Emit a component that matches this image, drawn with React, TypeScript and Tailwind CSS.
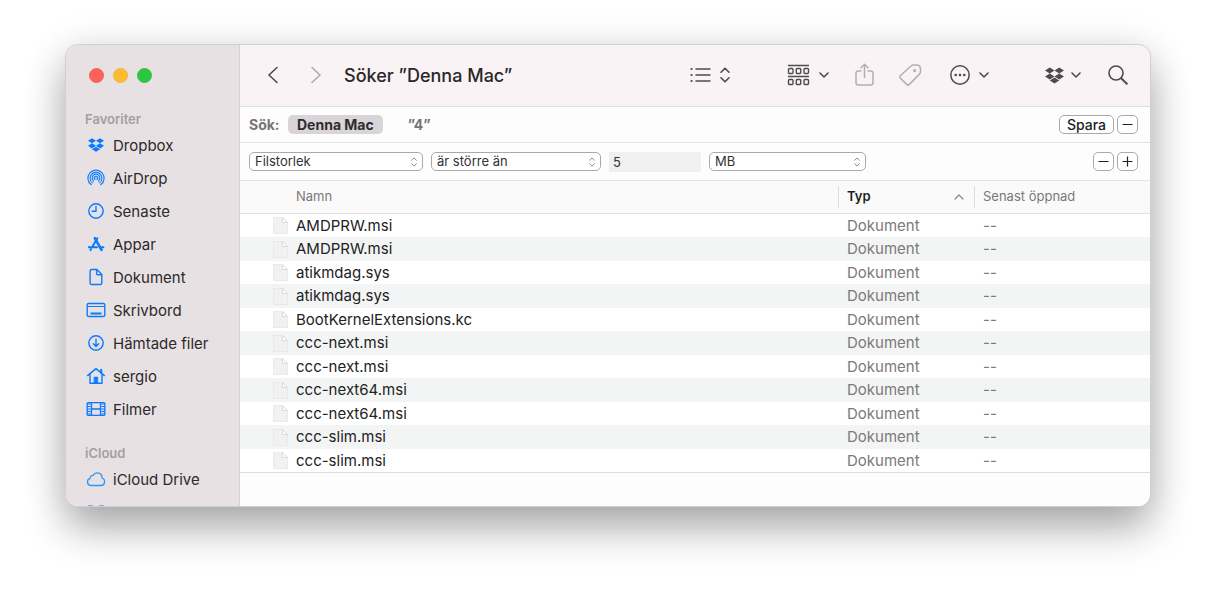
import React, { useState } from 'react';

interface IconProps {
  className?: string;
}

const DropboxIcon: React.FC<IconProps> = ({ className }) => (
  <svg viewBox="0 0 24 24" fill="currentColor" className={className} aria-hidden="true">
    <path d="M6 1.8 0 5.6l6 3.8 6-3.8zM18 1.8l-6 3.8 6 3.8 6-3.8zM0 13.3l6 3.8 6-3.8-6-3.8zM18 9.5l-6 3.8 6 3.8 6-3.8zM6 18.4l6 3.8 6-3.8-6-3.8z" />
  </svg>
);

const Line: React.FC<{ children: React.ReactNode }> = ({ children }) => (
  <svg
    viewBox="0 0 20 20"
    fill="none"
    stroke="currentColor"
    strokeWidth="1.4"
    strokeLinecap="round"
    strokeLinejoin="round"
    className="h-5 w-5"
    aria-hidden="true"
  >
    {children}
  </svg>
);

const AirDropIcon = () => (
  <Line>
    <g strokeWidth="1.1">
      <path d="M5.3 16.8a8.1 8.1 0 1 1 9.4 0" />
      <path d="M6.4 14.9a5.9 5.9 0 1 1 7.2 0" />
      <path d="M7.6 13a3.8 3.8 0 1 1 4.8 0" />
      <path d="M8.9 11.4a1.8 1.8 0 1 1 2.2 0" />
    </g>
    <circle cx="10" cy="10.2" r="0.6" fill="currentColor" stroke="none" />
  </Line>
);

const ClockIcon = () => (
  <Line>
    <circle cx="10" cy="10" r="7.2" />
    <path d="M10 5.4V10.3H6.2" />
  </Line>
);

const AppsIcon = () => (
  <Line>
    <path d="M2.8 13.2h8.2M14.6 13.2h2.8M11.3 4.2 6.4 12.8M5 15.2l-.5.9" strokeWidth="2" />
    <path d="m8.8 4.2 6.700 11.7" strokeWidth="2.6" />
  </Line>
);

const DocumentIcon = () => (
  <Line>
    <path d="M5.7 2.5h5.2l4.9 5v8.4c0 1-.6 1.6-1.6 1.6H5.7c-1 0-1.600-.6-1.600-1.600V4.1c0-1 .6-1.600 1.600-1.600z" />
    <path d="M10.6 2.8v3.8c0 .8.4 1.2 1.2 1.2h3.7" />
  </Line>
);

const DesktopIcon = () => (
  <Line>
    <rect x="1.2" y="3.5" width="17.6" height="13" rx="1.6" />
    <path d="M1.5 6.5h17" strokeWidth="1" />
    <path d="M4.5 13.5h11" strokeWidth="2" strokeLinecap="butt" />
  </Line>
);

const DownloadIcon = () => (
  <Line>
    <circle cx="10" cy="10" r="7.2" />
    <path d="M10 6.2v7.2M7.3 10.8l2.7 2.7 2.7-2.7" />
  </Line>
);

const HomeIcon = () => (
  <Line>
    <path d="M1.6 9.6 10 2.6l8.4 7M4 8.6v8.6h12V8.6" />
    <path d="M15.2 3.8v3" strokeWidth="2" />
    <path d="M8.2 11h3.600v6H8.2z" fill="currentColor" strokeWidth="0.5" />
  </Line>
);

const FilmIcon = () => (
  <Line>
    <rect x="1.2" y="3.6" width="17.6" height="12.8" rx="1.2" />
    <path d="M5.5 3.6v12.8M14.5 3.6v12.8M5.5 10h9" strokeWidth="1.3" />
    <path d="M3.4 4.6v11M16.6 4.6v11" strokeWidth="2.8" strokeDasharray="1 1.5" strokeLinecap="butt" />
  </Line>
);

const CloudIcon = () => (
  <Line>
    <path
      d="M4.6 16.5a3.7 3.7 0 0 1-.5-7.2 2.8 2.8 0 0 1 3.1-2.9 4.7 4.7 0 0 1 8.8 2.6 3.9 3.9 0 0 1-.4 7.5z"
      stroke="#2f97f5"
      strokeWidth="1.3"
    />
  </Line>
);

const BoxIcon = () => (
  <Line>
    <path d="M3 4.2h3.6M13.4 4.2H17M3 4v12h14V4" />
  </Line>
);

const favorites = [
  { name: 'Dropbox', icon: <DropboxIcon className="h-5 w-4" /> },
  { name: 'AirDrop', icon: <AirDropIcon /> },
  { name: 'Senaste', icon: <ClockIcon /> },
  { name: 'Appar', icon: <AppsIcon /> },
  { name: 'Dokument', icon: <DocumentIcon /> },
  { name: 'Skrivbord', icon: <DesktopIcon /> },
  { name: 'Hämtade filer', icon: <DownloadIcon /> },
  { name: 'sergio', icon: <HomeIcon /> },
  { name: 'Filmer', icon: <FilmIcon /> },
];

const files = [
  'AMDPRW.msi',
  'AMDPRW.msi',
  'atikmdag.sys',
  'atikmdag.sys',
  'BootKernelExtensions.kc',
  'ccc-next.msi',
  'ccc-next.msi',
  'ccc-next64.msi',
  'ccc-next64.msi',
  'ccc-slim.msi',
  'ccc-slim.msi',
];

const SidebarLink: React.FC<{ name: string; icon: React.ReactNode }> = ({ name, icon }) => (
  <li>
    <a href="#" className="flex h-[33px] items-start gap-[7px] pt-[6px] pl-5 text-[15px] leading-[22px] text-[#2b292a]">
      <span className="flex w-5 justify-center text-[#0a7aff]">{icon}</span>
      {name}
    </a>
  </li>
);

const ChevronDown = () => (
  <svg viewBox="0 0 10 6" fill="none" stroke="currentColor" strokeWidth="1.6" strokeLinecap="round" strokeLinejoin="round" className="h-[6px] w-[10px]" aria-hidden="true">
    <path d="m1 1 4 4 4-4" />
  </svg>
);

const UpDown: React.FC<IconProps> = ({ className }) => (
  <svg viewBox="0 0 10 16" fill="none" stroke="currentColor" strokeWidth="1.6" strokeLinecap="round" strokeLinejoin="round" className={className} aria-hidden="true">
    <path d="m1 5.2 4-4 4 4M1 10.8l4 4 4-4" />
  </svg>
);

interface PopupProps {
  label: string;
  options: string[];
  width: string;
}

const Popup: React.FC<PopupProps> = ({ label, options, width }) => {
  const [value, setValue] = useState(options[0]);
  return (
    <div className={`relative ${width}`}>
      <select
        aria-label={label}
        value={value}
        onChange={(e) => setValue(e.target.value)}
        className="block h-[19px] w-full appearance-none rounded-[5px] border border-[#aaa8a9] bg-white pl-[5px] text-[13px] leading-[17px] text-[#333]"
      >
        {options.map((option) => (
          <option key={option}>{option}</option>
        ))}
      </select>
      <UpDown className="pointer-events-none absolute top-[5px] right-[6px] h-[10px] w-[6px] text-[#858585]" />
    </div>
  );
};

const SmallButton: React.FC<{ label: string; plus?: boolean }> = ({ label, plus }) => (
  <button aria-label={label} className="flex h-[19px] w-[21px] items-center justify-center rounded-[5px] border border-[#aaa8a9] bg-white text-[#222]">
    <svg viewBox="0 0 11 11" stroke="currentColor" strokeWidth="1.2" className="h-[11px] w-[11px]" aria-hidden="true">
      <path d={plus ? 'M.5 5.5h10M5.5.5v10' : 'M.5 5.5h10'} />
    </svg>
  </button>
);

const FileIcon = () => (
  <svg viewBox="0 0 15 17" className="h-[17px] w-[15px]" aria-hidden="true">
    <path d="M.5.5h9l5 5v11H.5z" fill="#f1f1f1" stroke="#e6e6e6" strokeWidth="0.8" />
    <path d="M9.5.5v5h5z" fill="#fff" stroke="#d3d3d3" strokeWidth="0.8" />
  </svg>
);

const Sidebar = () => (
  <aside className="w-[174px] shrink-0 overflow-hidden border-r border-[#d6d0d3] bg-[#e7e1e3]">
    <div className="flex h-[60px] items-center gap-[9px] pl-[23px]">
      <button aria-label="Stäng" className="h-[15px] w-[15px] rounded-full border border-[#f0655d] bg-[#fe5f57]" />
      <button aria-label="Minimera" className="h-[15px] w-[15px] rounded-full border border-[#efb345] bg-[#febb2e]" />
      <button aria-label="Zooma" className="h-[15px] w-[15px] rounded-full border border-[#3abd4c] bg-[#2ac840]" />
    </div>
    <h2 className="pt-1 pl-[19px] text-[13px] leading-5 font-semibold text-[#a39fa1]">Favoriter</h2>
    <ul>
      {favorites.map((item) => (
        <SidebarLink key={item.name} name={item.name} icon={item.icon} />
      ))}
    </ul>
    <h2 className="mt-[13px] pt-1 pl-[19px] text-[13px] leading-5 font-semibold text-[#a39fa1]">iCloud</h2>
    <ul>
      <SidebarLink name="iCloud Drive" icon={<CloudIcon />} />
      <li className="h-[10px] overflow-hidden pt-[6px] pl-5 text-[#0a7aff]">
        <BoxIcon />
      </li>
    </ul>
  </aside>
);

const Toolbar = () => (
  <header className="flex h-[62px] items-center border-b border-[#e3dddf] bg-[#f9f3f5] pr-[22px] pb-px pl-[27px] text-[#4f4b4d]">
    <button aria-label="Bakåt">
      <svg viewBox="0 0 12 18" fill="none" stroke="currentColor" strokeWidth="1.6" strokeLinecap="round" strokeLinejoin="round" className="h-[18px] w-3" aria-hidden="true">
        <path d="M10 1.5 2 9l8 7.5" />
      </svg>
    </button>
    <button aria-label="Framåt" className="ml-[31px] text-[#b0abad]">
      <svg viewBox="0 0 12 18" fill="none" stroke="currentColor" strokeWidth="1.6" strokeLinecap="round" strokeLinejoin="round" className="h-[18px] w-3" aria-hidden="true">
        <path d="m2 1.5 8 7.5-8 7.5" />
      </svg>
    </button>
    <h1 className="ml-[22px] text-[18px] font-medium whitespace-nowrap text-[#2a2728]">Söker ”Denna Mac”</h1>

    <button aria-label="Visa som lista" className="ml-auto flex items-center gap-[9px]">
      <svg viewBox="0 0 21 16" fill="none" stroke="currentColor" strokeWidth="1.5" strokeLinecap="round" className="h-4 w-[21px]" aria-hidden="true">
        <path d="M6 2h14M6 8h14M6 14h14" />
        <path d="M1.5 2h.1M1.5 8h.1M1.5 14h.1" strokeWidth="2.2" />
      </svg>
      <UpDown className="h-4 w-[10px]" />
    </button>
    <button aria-label="Gruppera" className="ml-[57px] flex items-center gap-[9px]">
      <svg viewBox="0 0 23 22" fill="none" stroke="currentColor" strokeWidth="1.4" className="h-[22px] w-[23px]" aria-hidden="true">
        <path d="M1 1.5h21M1 12.5h21" />
        <rect x="1.5" y="4.5" width="4.5" height="5" rx="1" />
        <rect x="9.25" y="4.5" width="4.5" height="5" rx="1" />
        <rect x="17" y="4.5" width="4.5" height="5" rx="1" />
        <rect x="1.5" y="15.5" width="4.5" height="5" rx="1" />
        <rect x="9.25" y="15.5" width="4.5" height="5" rx="1" />
        <rect x="17" y="15.5" width="4.5" height="5" rx="1" />
      </svg>
      <ChevronDown />
    </button>
    <button aria-label="Dela" className="ml-[26px] text-[#b3aeb0]">
      <svg viewBox="0 0 19 24" fill="none" stroke="currentColor" strokeWidth="1.5" strokeLinecap="round" strokeLinejoin="round" className="h-6 w-[19px]" aria-hidden="true">
        <path d="M6 8H3.2C1.8 8 1 8.8 1 10.2v9.6C1 21.2 1.8 22 3.2 22h12.6c1.4 0 2.2-.8 2.2-2.2v-9.6C18 8.8 17.2 8 15.8 8H13" />
        <path d="M9.5 14.5V1.5M6 4.8l3.5-3.5L13 4.8" />
      </svg>
    </button>
    <button aria-label="Taggar" className="ml-[24px] text-[#b3aeb0]">
      <svg viewBox="0 0 24 24" fill="none" stroke="currentColor" strokeWidth="1.5" strokeLinejoin="round" className="h-6 w-6" aria-hidden="true">
        <path d="M13 3c.7-.7 1.5-1 2.4-1h3.1c2.6 0 4 1.4 4 4v2.6c0 1-.3 1.8-1 2.5L11.4 21.4c-.9.9-1.9.9-2.8 0l-6.1-6.1c-.9-.9-.9-1.9 0-2.8z" />
        <circle cx="16.6" cy="7.6" r="0.8" fill="currentColor" />
      </svg>
    </button>
    <button aria-label="Fler åtgärder" className="ml-[28px] flex items-center gap-[9px]">
      <svg viewBox="0 0 20 20" fill="none" stroke="currentColor" strokeWidth="1.5" className="h-5 w-5" aria-hidden="true">
        <circle cx="10" cy="10" r="9.2" />
        <g fill="currentColor" stroke="none">
          <circle cx="5.7" cy="10" r="1.3" />
          <circle cx="10" cy="10" r="1.3" />
          <circle cx="14.3" cy="10" r="1.3" />
        </g>
      </svg>
      <ChevronDown />
    </button>
    <button aria-label="Dropbox" className="ml-[56px] flex items-center gap-[7px]">
      <DropboxIcon className="h-[19px] w-[19px]" />
      <ChevronDown />
    </button>
    <button aria-label="Sök" className="ml-[27px]">
      <svg viewBox="0 0 20 20" fill="none" stroke="currentColor" strokeLinecap="round" className="h-5 w-5" aria-hidden="true">
        <circle cx="8" cy="8" r="7" strokeWidth="1.6" />
        <path d="m13.2 13.2 5.6 5.6" strokeWidth="2" />
      </svg>
    </button>
  </header>
);

const App = () => {
  const [size, setSize] = useState('5');

  return (
    <div className="bg-white px-[66px] pt-[45px] pb-[87px] font-['Inter','Liberation_Sans',sans-serif]">
      <div className="flex overflow-hidden rounded-[12px] bg-white shadow-[0_0_0_1px_#d0d0d0,0_22px_42px_rgba(0,0,0,0.32),0_0_44px_rgba(0,0,0,0.09)]">
        <Sidebar />
        <main className="flex min-w-0 flex-1 flex-col">
          <Toolbar />

          <div className="flex h-9 items-center border-b border-[#e4e2e3] bg-[#fdfdfd] pr-[12px] pl-[9px] text-[14px] font-bold text-[#767475]">
            <span className="w-[39px]">Sök:</span>
            <button className="h-[19px] rounded-[5px] bg-[#d8d4d7] px-[9px] leading-[19px] text-[#2f2c2d]">Denna Mac</button>
            <button className="ml-[25px]">”4”</button>
            <div className="ml-auto flex gap-[3px]">
              <button className="h-[19px] rounded-[5px] border border-[#aaa8a9] bg-white px-[7px] leading-[17px] font-medium text-[#222]">
                Spara
              </button>
              <SmallButton label="Ta bort sökning" />
            </div>
          </div>

          <div className="flex h-[38px] items-center gap-2 border-b border-[#e4e2e3] bg-[#fdfdfd] pr-[12px] pl-[9px]">
            <Popup label="Attribut" options={['Filstorlek', 'Namn', 'Sort']} width="w-[174px]" />
            <Popup label="Villkor" options={['är större än', 'är mindre än', 'är']} width="w-[170px]" />
            <input
              aria-label="Storlek"
              value={size}
              onChange={(e) => setSize(e.target.value)}
              className="h-5 w-[92px] bg-[#f0f0f0] px-1 text-[13px] text-[#333]"
            />
            <Popup label="Enhet" options={['MB', 'kB', 'GB']} width="w-[157px]" />
            <div className="ml-auto flex gap-[3px]">
              <SmallButton label="Ta bort villkor" />
              <SmallButton label="Lägg till villkor" plus />
            </div>
          </div>

          <table className="w-full table-fixed border-separate border-spacing-0 text-left">
            <colgroup>
              <col />
              <col className="w-[136px]" />
              <col className="w-[176px]" />
            </colgroup>
            <thead className="bg-[#f9faf9] text-[13px] text-[#7b7979]">
              <tr className="h-[33px]">
                <th className="border-b border-[#e4e2e3] p-0 pl-[56px] font-normal">Namn</th>
                <th className="border-b border-[#e4e2e3] p-0">
                  <div className="flex h-[22px] items-center justify-between border-l border-[#dddbdc] pr-[10px] pl-2 font-semibold text-[#1f1f1f]">
                    Typ
                    <svg viewBox="0 0 10 6" fill="none" stroke="#8a8888" strokeWidth="1.2" strokeLinecap="round" strokeLinejoin="round" className="h-[6px] w-[10px]" aria-hidden="true">
                      <path d="m1 5 4-4 4 4" />
                    </svg>
                  </div>
                </th>
                <th className="border-b border-[#e4e2e3] p-0">
                  <div className="flex h-[22px] items-center border-l border-[#dddbdc] pl-2 font-normal">Senast öppnad</div>
                </th>
              </tr>
            </thead>
            <tbody className="text-[15px] leading-5 text-[#7b7979]">
              {files.map((file, index) => (
                <tr key={index} className="odd:h-[23px] even:h-6 even:bg-[#f3f5f4]">
                  <td className="p-0 pl-[33px]">
                    <div className="flex items-center gap-2 text-[#222]">
                      <FileIcon />
                      {file}
                    </div>
                  </td>
                  <td className="p-0 pl-[9px]">Dokument</td>
                  <td className="p-0 pl-[9px]">--</td>
                </tr>
              ))}
            </tbody>
          </table>
          <div className="min-h-[34px] flex-1 border-t border-[#dcdcdc] bg-[#fdfdfd]" />
        </main>
      </div>
    </div>
  );
};

export default App;
